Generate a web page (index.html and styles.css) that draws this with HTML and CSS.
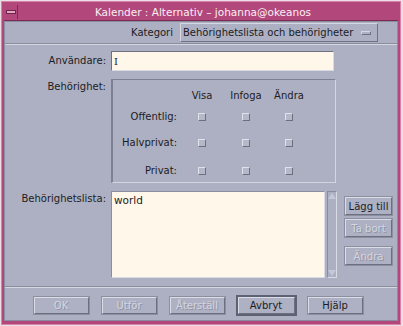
FILE: index.html
```html
<!DOCTYPE html>
<html lang="sv">
<head>
  <meta charset="UTF-8" />
  <title>Kalender : Alternativ</title>
  <link rel="stylesheet" href="styles.css">
</head>
<body>
  <div class="window">
    <div class="titlebar">
      <div class="menu-btn"><span></span></div>
      <div class="title">Kalender : Alternativ – johanna@okeanos</div>
    </div>
    <div class="client">
      <!-- kategori -->
      <div class="category">
        <span class="cat-label">Kategori</span>
        <div class="dropdown">Behörighetslista och behörigheter <span class="mark"></span></div>
      </div>

      <div class="form">
        <div class="row">
          <label class="lbl">Användare:</label>
          <div class="input"><span class="caret">I</span></div>
        </div>

        <div class="row">
          <div class="lbl top">Behörighet:</div>
          <div class="perm-box">
            <div class="perm-grid">
              <span></span><span class="head">Visa</span><span class="head">Infoga</span><span class="head">Ändra</span>
              <span class="plabel">Offentlig:</span><i class="cb"></i><i class="cb"></i><i class="cb"></i>
              <span class="plabel">Halvprivat:</span><i class="cb"></i><i class="cb"></i><i class="cb"></i>
              <span class="plabel">Privat:</span><i class="cb"></i><i class="cb"></i><i class="cb"></i>
            </div>
          </div>
        </div>

        <div class="row">
          <div class="lbl top">Behörighetslista:</div>
          <div class="list-wrap">
            <div class="list">world</div>
            <div class="scroll"><span class="arr up"></span><span class="arr down"></span></div>
          </div>
          <div class="side-btns">
            <button class="btn">Lägg till</button>
            <button class="btn off">Ta bort</button>
            <button class="btn off gap">Ändra</button>
          </div>
        </div>
      </div>

      <div class="footer">
        <button class="btn wide off">OK</button>
        <button class="btn wide off">Utför</button>
        <button class="btn wide off">Återställ</button>
        <button class="btn wide default">Avbryt</button>
        <button class="btn wide">Hjälp</button>
      </div>
    </div>
  </div>
</body>
</html>
```

FILE: styles.css
```css
body {
  margin: 0;
  background: #e9dfe5;
  font-family: 'DejaVu Sans', sans-serif;
  font-size: 10px;
  color: #1c1c24;
}
.window {
  margin: 1px;
  width: 394px;
  height: 317px;
  background: #b1477a;
  border: 1px solid #d884a8;
  padding: 2px 2px 3px 2px;
  display: flex;
  flex-direction: column;
}
.titlebar {
  height: 16px;
  display: flex;
  align-items: center;
  border-bottom: 1px solid #7c2a52;
}
.menu-btn {
  width: 13px;
  height: 14px;
  border-right: 1px solid #7c2a52;
  display: flex;
  align-items: center;
  justify-content: center;
}
.menu-btn span {
  width: 8px;
  height: 2px;
  background: #e3a9c3;
  border: 1px solid #6e2448;
}
.title {
  flex: 1;
  text-align: center;
  color: #fbeef4;
  font-size: 10.5px;
  padding-right: 10px;
}
.client {
  flex: 1;
  background: #adb0c2;
  border: 1px solid #8a8da0;
  display: flex;
  flex-direction: column;
}
.category {
  height: 21px;
  display: flex;
  align-items: center;
  justify-content: flex-end;
  padding-right: 19px;
  border-bottom: 1px solid #8a8da0;
  box-shadow: 0 1px 0 #d4d6e0;
}
.cat-label { margin-right: 7px; }
.dropdown {
  width: 188px;
  height: 17px;
  border: 1px solid #d6d8e2;
  border-right-color: #6f7284;
  border-bottom-color: #6f7284;
  display: flex;
  align-items: center;
  justify-content: space-between;
  padding: 0 6px 0 2px;
}
.mark {
  width: 8px;
  height: 2px;
  border: 1px solid #d6d8e2;
  border-right-color: #6f7284;
  border-bottom-color: #6f7284;
}
.form {
  flex: 1;
  padding: 7px 0 0;
  display: flex;
  flex-direction: column;
  gap: 8px;
  border-bottom: 1px solid #8a8da0;
  box-shadow: 0 1px 0 #d4d6e0;
}
.row { display: flex; }
.lbl {
  width: 101px;
  padding-right: 5px;
  text-align: right;
  line-height: 20px;
}
.lbl.top { line-height: 16px; }
.input {
  width: 221px;
  height: 18px;
  background: #fff7ea;
  border: 1px solid #6e7182;
  border-right-color: #d8dae4;
  border-bottom-color: #d8dae4;
  display: flex;
  align-items: center;
}
.caret { font-family: 'DejaVu Serif', serif; margin-left: 2px; }
.perm-box {
  width: 222px;
  height: 102px;
  border: 1px solid #7d8092;
  border-left-width: 2px;
  border-right-color: #d3d5df;
  border-bottom-color: #d3d5df;
}
.perm-grid {
  display: grid;
  grid-template-columns: 68px 42px 46px 40px;
  grid-template-rows: 21px 26px 28px 14px;
  margin-top: 9px;
  align-items: start;
}
.head { text-align: center; line-height: 14px; }
.plabel { text-align: right; padding-right: 4px; line-height: 14px; }
.cb {
  justify-self: center;
  margin-top: 3px;
  width: 6px;
  height: 6px;
  background: #b5b8c9;
  border: 1px solid #e0e2ea;
  border-right-color: #6c6f80;
  border-bottom-color: #6c6f80;
}
.list-wrap { display: flex; gap: 2px; }
.list {
  width: 208px;
  height: 81px;
  padding: 2px;
  background: #fff7ea;
  border: 1px solid #8a8da0;
  border-right-color: #d8dae4;
  border-bottom-color: #d8dae4;
  font-size: 10.5px;
}
.scroll {
  width: 8px;
  height: 83px;
  border: 1px solid #8a8da0;
  border-right-color: #d8dae4;
  border-bottom-color: #d8dae4;
  display: flex;
  flex-direction: column;
  justify-content: space-between;
  align-items: center;
  padding: 1px 0;
}
.arr {
  width: 0;
  height: 0;
  border-left: 4px solid transparent;
  border-right: 4px solid transparent;
}
.arr.up { border-bottom: 6px solid #c5c8d6; }
.arr.down { border-top: 6px solid #c5c8d6; }
.side-btns {
  display: flex;
  flex-direction: column;
  gap: 4px;
  margin: 6px 0 0 8px;
}
.side-btns .btn { height: 18px; }
.side-btns .gap { margin-top: 6px; }
.btn {
  font-family: 'DejaVu Sans', sans-serif;
  font-size: 10px;
  color: #1c1c24;
  background: #aeb1c3;
  border: 1px solid #dadce6;
  border-right-color: #6c6f80;
  border-bottom-color: #6c6f80;
  outline: 1px solid #8c8fa0;
  height: 17px;
  width: 47px;
  padding: 0;
  margin: 0;
}
.btn.off { color: #d4d6e0; text-shadow: 1px 1px 0 #8f92a3; }
.footer {
  height: 33px;
  display: flex;
  align-items: center;
  justify-content: center;
  gap: 13px;
  padding: 3px 6px 0 0;
  box-sizing: border-box;
}
.btn.wide { width: 55px; }
.btn.default {
  width: 57px;
  outline: 2px solid #5e6172;
}
```
